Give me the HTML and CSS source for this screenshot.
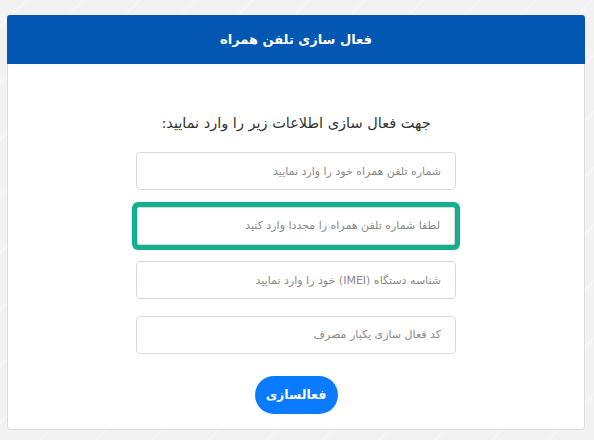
FILE: index.html
```html
<!DOCTYPE html>
<html lang="fa" dir="rtl">
<head>
<meta charset="utf-8">
<title>فعال سازی تلفن همراه</title>
<link rel="stylesheet" href="styles.css">
</head>
<body>
<div class="card">
  <div class="card-header">فعال سازی تلفن همراه</div>
  <div class="card-body">
    <h2 class="lead">جهت فعال سازی اطلاعات زیر را وارد نمایید:</h2>
    <form class="form">
      <input class="field" type="text" placeholder="شماره تلفن همراه خود را وارد نمایید">
      <input class="field field-marked" type="text" placeholder="لطفا شماره تلفن همراه را مجددا وارد کنید">
      <input class="field" type="text" placeholder="شناسه دستگاه (IMEI) خود را وارد نمایید">
      <input class="field" type="text" placeholder="کد فعال سازی یکبار مصرف">
      <button class="btn" type="button">فعالسازی</button>
    </form>
  </div>
</div>
</body>
</html>
```
FILE: styles.css
```css
html, body {
  margin: 0;
  padding: 0;
}
body {
  background-color: #f2f2f2;
  background-image: repeating-linear-gradient(135deg, rgba(255,255,255,0) 0 18px, rgba(255,255,255,0.3) 18px 20px, rgba(255,255,255,0) 20px 40px);
  font-family: "DejaVu Sans", sans-serif;
  height: 440px;
  overflow: hidden;
}
.card {
  margin: 15px 9px 0 7px;
  height: 415px;
  background: #fff;
  border: 1px solid #dcdcdc;
  border-radius: 4px;
  box-sizing: border-box;
}
.card-header {
  height: 49px;
  background: #0157b2;
  color: #fff;
  border-radius: 3px 3px 0 0;
  display: flex;
  align-items: center;
  justify-content: center;
  font-size: 13px;
  font-weight: bold;
  margin: -1px -1px 0 -1px;
}
.card-body {
  padding-top: 47px;
  display: flex;
  flex-direction: column;
  align-items: center;
}
.lead {
  margin: 0 0 17px;
  font-size: 14.5px;
  font-weight: normal;
  line-height: 24px;
  color: #333;
}
.form {
  width: 320px;
  display: flex;
  flex-direction: column;
  align-items: center;
  gap: 16.5px;
}
.field {
  width: 100%;
  height: 38px;
  box-sizing: border-box;
  border: 1px solid #dadada;
  border-radius: 4px;
  padding: 0 14px;
  font-family: "DejaVu Sans", sans-serif;
  font-size: 11px;
  background: #fff;
  direction: rtl;
  text-align: right;
}
.field::placeholder {
  color: #8a8a8a;
}
.field-marked {
  width: 318px;
  box-shadow: 0 0 0 5px #12b08f;
  border-radius: 2px;
}
.btn {
  margin-top: 5.5px;
  width: 83px;
  height: 38px;
  border: none;
  border-radius: 19px;
  background: #0a7bff;
  color: #fff;
  font-family: "DejaVu Sans", sans-serif;
  font-size: 12.5px;
  font-weight: bold;
  padding: 0;
}
```
